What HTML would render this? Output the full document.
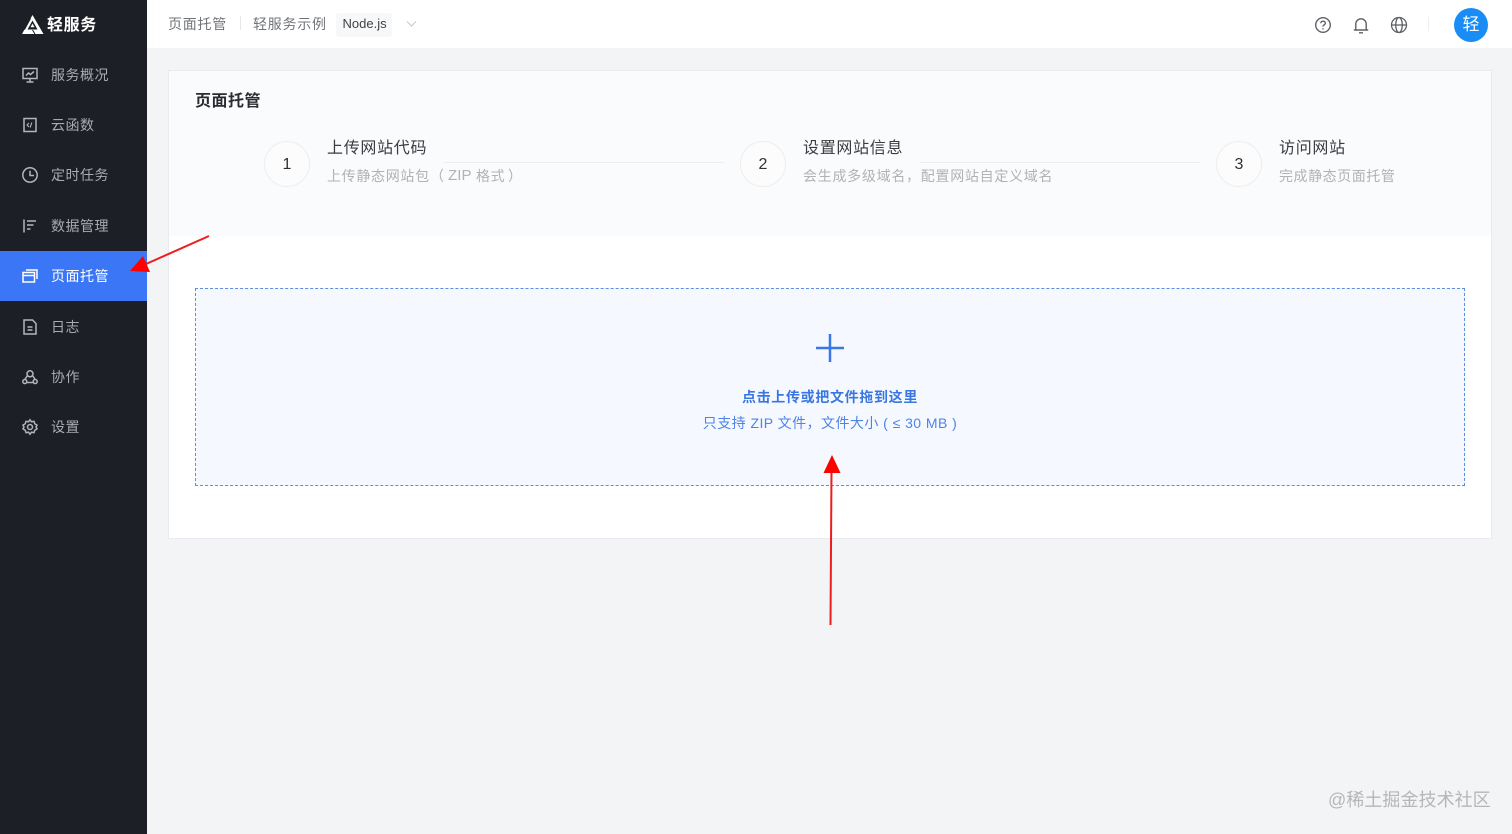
<!DOCTYPE html>
<html lang="zh-CN">
<head>
<meta charset="utf-8">
<title>页面托管</title>
<style>
*{box-sizing:border-box;margin:0;padding:0}
html,body{width:1512px;height:834px;overflow:hidden;background:#f3f4f6;font-family:"Liberation Sans","Noto Sans CJK SC",sans-serif}
.a{position:absolute;white-space:nowrap;line-height:20px}
#side{position:absolute;left:0;top:0;width:147px;height:834px;background:#1c1f26}
#active{position:absolute;left:0;top:251px;width:147px;height:50px;background:#3a76f6}
.m{position:absolute;left:51px;font-size:14px;letter-spacing:.5px;color:#a9abae;line-height:20px;white-space:nowrap}
.i{position:absolute;left:21px;width:18px;height:18px;fill:none;stroke:#b4b5b8;stroke-width:1.5}
#top{position:absolute;left:147px;top:0;width:1365px;height:48px;background:#fff}
.t{position:absolute;font-size:14px;letter-spacing:.75px;color:#71747a;line-height:20px;white-space:nowrap}
#card{position:absolute;left:168px;top:70px;width:1324px;height:469px;background:#fff;border:1px solid #e9ebee}
#head{position:absolute;left:169px;top:71px;width:1322px;height:165px;background:#fafbfd}
.c{position:absolute;top:141px;width:46px;height:46px;border:1px solid #eceef0;border-radius:50%;background:#fcfcfd;text-align:center;line-height:45px;font-size:16px;color:#2f3136}
.st{position:absolute;top:139px;font-size:16px;letter-spacing:.7px;color:#3a3c41;line-height:20px;white-space:nowrap}
.sd{position:absolute;top:166px;font-size:14px;letter-spacing:.68px;color:#b0b2b6;line-height:20px;white-space:nowrap}
.ln{position:absolute;top:162px;height:1px;background:#eceef0}
#drop{position:absolute;left:195px;top:288px;width:1270px;height:198px;background:#f5f9ff;border:1px dashed #5f8fdc}
#arrows{position:absolute;left:0;top:0;width:1512px;height:834px;pointer-events:none}
</style>
</head>
<body>
<div id="side"></div>
<div id="active"></div>

<svg class="a" style="left:21px;top:14px;width:24px;height:21px" viewBox="0 0 24 21">
<path d="M11.500 1 L22.500 20 L1 20 Z" fill="#fff"/>
<path d="M11.500 6.500 L16.500 15.500 L6.500 15.500 Z" fill="#1c1f26"/>
<path d="M11.500 9.500 L13.500 13.300 L9.500 13.300 Z" fill="#fff"/>
<path d="M9.500 4.500 L3.500 15.500 M14 20 L11.500 16" stroke="#1c1f26" stroke-width="1" fill="none"/>
</svg>
<div class="a" style="left:47px;top:16px;font-size:16px;font-weight:700;color:#fff;letter-spacing:.6px">轻服务</div>

<svg class="i" style="top:66px" viewBox="0 0 18 18"><rect x="2" y="2.500" width="14" height="10"/><path d="M9 12.500V16M5.500 16h7M5 9.500l2.500-2.500 2 1.500L13 5.500"/></svg>
<div class="m" style="top:65px">服务概况</div>
<svg class="i" style="top:116px" viewBox="0 0 18 18"><rect x="3" y="2.500" width="12" height="13"/><path d="M8 7l-2 2 2 2M10.800 6.500l-1.600 5" stroke-width="1.100"/></svg>
<div class="m" style="top:115px">云函数</div>
<svg class="i" style="top:166px" viewBox="0 0 18 18"><circle cx="9" cy="9" r="7.200"/><path d="M9 4.800V9.500H13"/></svg>
<div class="m" style="top:165px">定时任务</div>
<svg class="i" style="top:217px" viewBox="0 0 18 18"><path d="M3 2.500V15.500M6 4H15M6 8H12.500M6 12H9.500"/></svg>
<div class="m" style="top:216px">数据管理</div>
<svg class="i" style="top:267px;stroke:#fff" viewBox="0 0 18 18"><rect x="2" y="5.500" width="11.500" height="9.500"/><path d="M5 3H16V12M2 8.500H13.500"/></svg>
<div class="m" style="top:266px;color:#fff">页面托管</div>
<svg class="i" style="top:318px" viewBox="0 0 18 18"><path d="M3 2H11.500L15 5.500V16H3ZM6.500 9H11.500M6.500 12H11.500"/></svg>
<div class="m" style="top:317px">日志</div>
<svg class="i" style="top:368px" viewBox="0 0 18 18"><path d="M6 5.800A3 3 0 1 1 12 5.800A3 3 0 1 1 6 5.800Z"/><circle cx="3.800" cy="13.500" r="2"/><circle cx="14.200" cy="13.500" r="2"/><path d="M6.500 7.500L3.800 11.500M11.500 7.500L14.200 11.500M5.800 14.500H12.200"/></svg>
<div class="m" style="top:367px">协作</div>
<svg class="i" style="top:418px" viewBox="0 0 18 18"><path d="M9 1.800l1.500 2 2.500-.4.800 2.400 2.200 1.300L15 9l1 1.900-2.200 1.300-.8 2.400-2.500-.4L9 16.200l-1.500-2-2.500.4-.8-2.400L2 10.900 3 9 2 7.100l2.200-1.300.8-2.400 2.500.4z"/><circle cx="9" cy="9" r="2.500"/></svg>
<div class="m" style="top:417px">设置</div>

<div id="top"></div>
<div class="t" style="left:168px;top:14px">页面托管</div>
<div class="a" style="left:240px;top:16px;width:1px;height:14px;background:#e6e7e9"></div>
<div class="t" style="left:253px;top:14px">轻服务示例</div>
<div class="a" style="left:336px;top:13px;width:56px;height:24px;background:#f7f8f9;border-radius:3px"></div>
<div class="a" style="left:342.500px;top:14px;font-size:13px;color:#3f4247">Node.js</div>
<svg class="a" style="left:406px;top:20px;width:11px;height:8px" viewBox="0 0 11 8"><path d="M1 1.500L5.500 6 10 1.500" fill="none" stroke="#c6c8cb" stroke-width="1"/></svg>

<svg class="a" style="left:1314px;top:16px;width:18px;height:18px" viewBox="0 0 18 18" fill="none" stroke="#5f6166" stroke-width="1.400"><circle cx="9" cy="9" r="7.300"/><path d="M6.800 7.200C6.800 4.500 11.300 4.500 11.300 7.200C11.300 8.800 9 8.800 9 10.600"/><path d="M9 12.200V13.500"/></svg>
<svg class="a" style="left:1352px;top:16px;width:18px;height:18px" viewBox="0 0 18 18" fill="none" stroke="#5f6166" stroke-width="1.400"><path d="M1.800 14H16.200M3.800 14V8A5.200 5.200 0 0 1 14.200 8V14M7 16.800H11"/></svg>
<svg class="a" style="left:1390px;top:16px;width:18px;height:18px" viewBox="0 0 18 18" fill="none" stroke="#5f6166" stroke-width="1.300"><circle cx="9" cy="9" r="7.500"/><ellipse cx="9" cy="9" rx="3.300" ry="7.500"/><path d="M1.500 9H16.500"/></svg>
<div class="a" style="left:1428px;top:17px;width:1px;height:14px;background:#eeeff1"></div>
<div class="a" style="left:1454px;top:8px;width:34px;height:34px;border-radius:50%;background:#1a8cf5;color:#fff;font-size:17px;line-height:34px;text-align:center">轻</div>

<div id="card"></div>
<div id="head"></div>
<div class="a" style="left:195px;top:92px;font-size:16px;font-weight:700;letter-spacing:.5px;color:#2a2c30">页面托管</div>

<div class="ln" style="left:444px;width:280px"></div>
<div class="ln" style="left:920px;width:280px"></div>
<div class="c" style="left:264px">1</div>
<div class="c" style="left:740px">2</div>
<div class="c" style="left:1216px">3</div>
<div class="st" style="left:327px">上传网站代码</div>
<div class="sd" style="left:327px">上传静态网站包</div>
<div class="sd" style="left:430px">（</div>
<div class="sd" style="left:448px;font-size:15px;letter-spacing:.1px">ZIP</div>
<div class="sd" style="left:476px">格式</div>
<div class="sd" style="left:508px">）</div>
<div class="st" style="left:803px">设置网站信息</div>
<div class="sd" style="left:803px;letter-spacing:.72px">会生成多级域名，配置网站自定义域名</div>
<div class="st" style="left:1279px">访问网站</div>
<div class="sd" style="left:1279px;letter-spacing:.55px">完成静态页面托管</div>

<div id="drop"></div>
<svg class="a" style="left:815px;top:333px;width:30px;height:30px" viewBox="0 0 30 30"><path d="M15 1V29M1 15H29" stroke="#3a76e8" stroke-width="2.500" fill="none"/></svg>
<div class="a" style="left:195px;width:1270px;top:387px;text-align:center;font-size:14px;font-weight:700;letter-spacing:.67px;color:#3a76e0">点击上传或把文件拖到这里</div>
<div class="a" style="left:195px;width:1270px;top:413px;text-align:center;font-size:14px;letter-spacing:.45px;color:#4d84e6">只支持 ZIP 文件，文件大小 ( ≤ 30 MB )</div>

<svg id="arrows" viewBox="0 0 1512 834">
<path d="M209 236L146 264" stroke="#ee1c1c" stroke-width="2" fill="none"/>
<path d="M130 271L143 256L150 272Z" fill="#f00"/>
<path d="M830.500 625L831.500 470" stroke="#ee1c1c" stroke-width="2" fill="none"/>
<path d="M832 455L823.500 473H840.500Z" fill="#f00"/>
</svg>

<div class="a" style="left:1328px;top:790px;font-size:18px;color:#b4b6b9;letter-spacing:.05px">@稀土掘金技术社区</div>
</body>
</html>
